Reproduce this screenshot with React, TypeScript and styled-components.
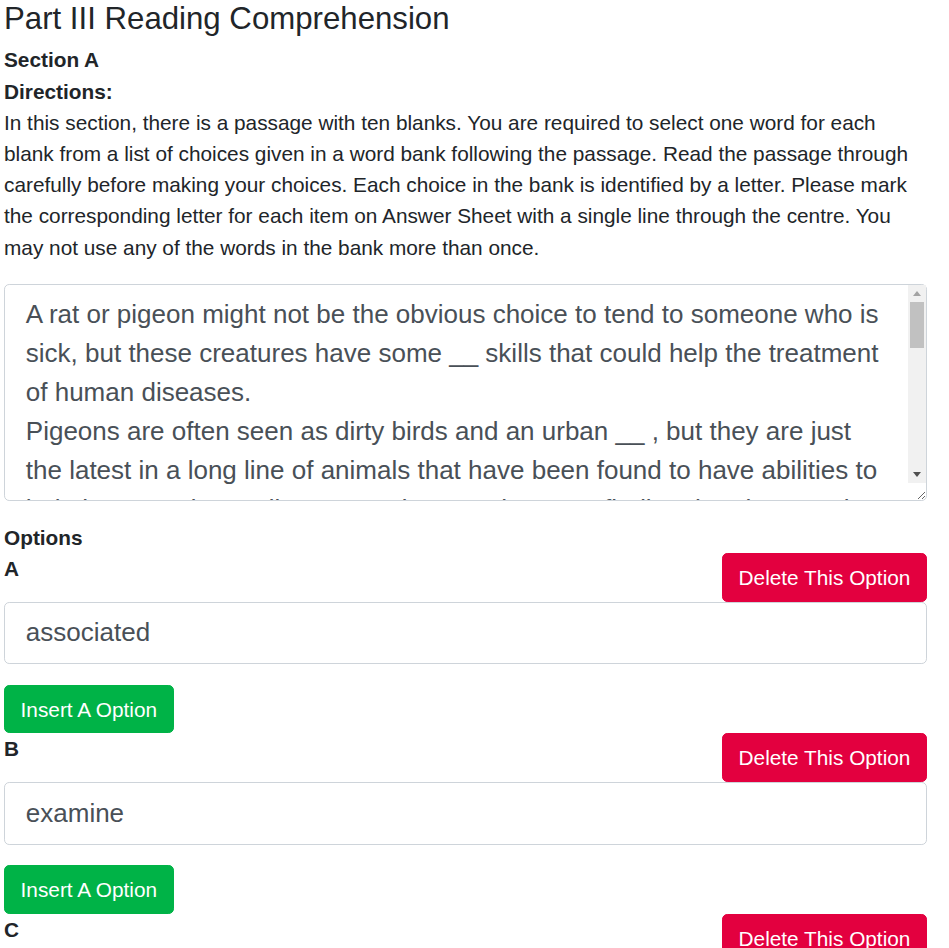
import * as React from "react";
import styled, { createGlobalStyle } from "styled-components";

const GlobalStyle = createGlobalStyle`
  html {
    font-size: 20.8px;
  }
  body {
    margin: 0;
    font-family: "Liberation Sans", Arial, sans-serif;
    font-size: 1rem;
    line-height: 1.5;
    color: #212529;
    background: #fff;
  }
  * {
    box-sizing: border-box;
  }
`;

const Page = styled.div`
  width: 931px;
  padding: 0 4px;
`;

const Title = styled.h3`
  margin: 0 0 7px;
  font-size: 31.2px;
  font-weight: 400;
  line-height: 1.2;
`;

const Label = styled.div`
  font-weight: 700;
`;

const Directions = styled.p`
  margin: 0 0 21px;
`;

const PassageBox = styled.div`
  position: relative;
  margin: 0 0 20.8px;
`;

const Passage = styled.textarea`
  display: block;
  width: 100%;
  height: 217px;
  padding: 10.4px 38px 10.4px 20.8px;
  font-family: inherit;
  font-size: 26px;
  line-height: 1.5;
  color: #495057;
  border: 1px solid #ced4da;
  border-radius: 5.2px;
  resize: vertical;
  overflow: hidden;
`;

const ScrollTrack = styled.div`
  position: absolute;
  top: 1px;
  right: 1px;
  bottom: 18px;
  width: 18px;
  background: #f1f1f1;
  display: flex;
  flex-direction: column;
  pointer-events: none;
`;

const Arrow = styled.div<{ $dir: "up" | "down" }>`
  height: 17px;
  display: flex;
  align-items: center;
  justify-content: center;
  &::before {
    content: "";
    border-left: 4.5px solid transparent;
    border-right: 4.5px solid transparent;
    ${(p) =>
      p.$dir === "up"
        ? "border-bottom: 5px solid #a3a3a3;"
        : "border-top: 5px solid #505050;"}
  }
`;

const Thumb = styled.div`
  height: 46px;
  margin: 0 2px;
  background: #c1c1c1;
`;

const Spacer = styled.div`
  flex: 1;
`;

const OptionRow = styled.div`
  display: flex;
  justify-content: space-between;
  align-items: flex-start;
`;

const Button = styled.button<{ $tone: "danger" | "success" }>`
  display: inline-block;
  padding: 7.8px 15.6px;
  font-family: inherit;
  font-size: 1rem;
  line-height: 1.5;
  color: #fff;
  border: 1.3px solid ${(p) => (p.$tone === "danger" ? "#e3003f" : "#00b347")};
  background: ${(p) => (p.$tone === "danger" ? "#e3003f" : "#00b347")};
  border-radius: 5.2px;
  cursor: pointer;
`;

const OptionInput = styled.input`
  display: block;
  width: 100%;
  height: 62.4px;
  padding: 10.4px 20.8px;
  font-family: inherit;
  font-size: 26px;
  line-height: 1.5;
  color: #495057;
  border: 1.3px solid #ced4da;
  border-radius: 5.2px;
  margin-bottom: 20.8px;
`;

const passage = `A rat or pigeon might not be the obvious choice to tend to someone who is sick, but these creatures have some __ skills that could help the treatment of human diseases.
Pigeons are often seen as dirty birds and an urban __ , but they are just the latest in a long line of animals that have been found to have abilities to help humans detect disease, and researchers are finding that they can be taught to spot cancer.`;

const options = [
  { letter: "A", value: "associated" },
  { letter: "B", value: "examine" },
  { letter: "C", value: "" },
];

const App = () => {
  return (
    <Page>
      <GlobalStyle />
      <Title>Part III Reading Comprehension</Title>
      <Label>Section A</Label>
      <Label>Directions:</Label>
      <Directions>
        In this section, there is a passage with ten blanks. You are required to select one word
        for each blank from a list of choices given in a word bank following the passage. Read the
        passage through carefully before making your choices. Each choice in the bank is
        identified by a letter. Please mark the corresponding letter for each item on Answer Sheet
        with a single line through the centre. You may not use any of the words in the bank more
        than once.
      </Directions>
      <PassageBox>
        <Passage defaultValue={passage} />
        <ScrollTrack>
          <Arrow $dir="up" />
          <Thumb />
          <Spacer />
          <Arrow $dir="down" />
        </ScrollTrack>
      </PassageBox>
      <Label>Options</Label>
      {options.map((o) => (
        <div key={o.letter}>
          <OptionRow>
            <Label>{o.letter}</Label>
            <Button $tone="danger">Delete This Option</Button>
          </OptionRow>
          <OptionInput defaultValue={o.value} />
          <Button $tone="success">Insert A Option</Button>
        </div>
      ))}
    </Page>
  );
};

export default App;
